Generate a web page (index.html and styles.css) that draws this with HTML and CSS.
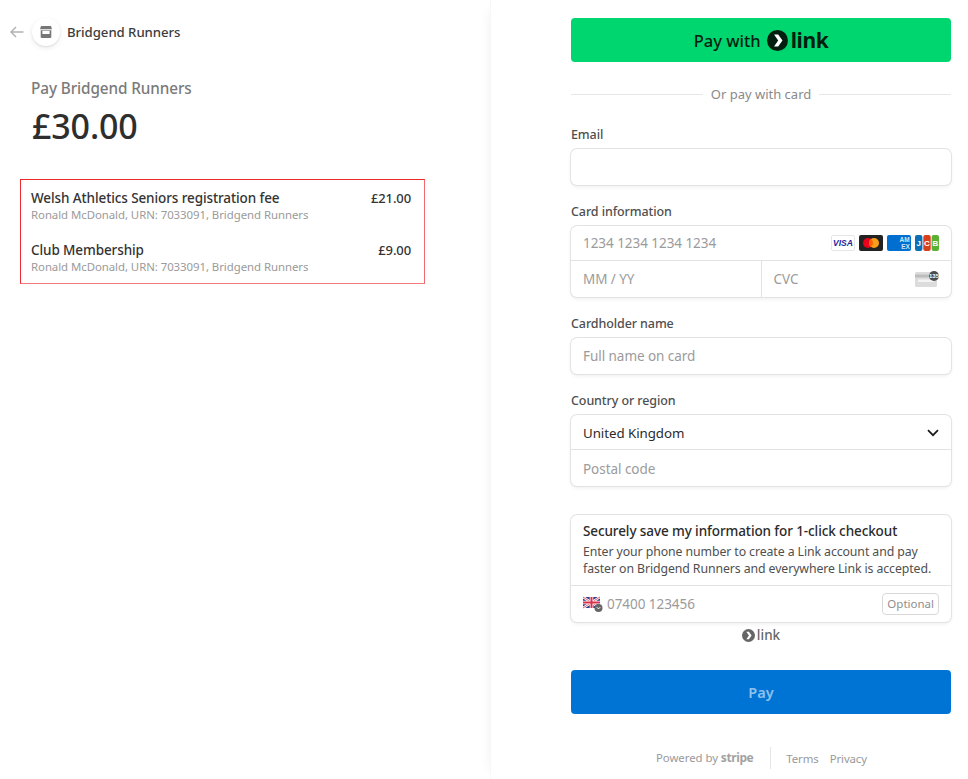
FILE: index.html
```html
<!DOCTYPE html>
<html lang="en">
<head>
<meta charset="utf-8">
<title>Pay Bridgend Runners</title>
<link rel="stylesheet" href="styles.css">
</head>
<body>
<div class="page">
  <section class="summary">
    <header class="merchant">
      <svg class="back" width="14" height="12" viewBox="0 0 14 12"><path d="M6 1 1 6l5 5M1 6h12.5" fill="none" stroke="#b3b3b3" stroke-width="1.5"/></svg>
      <span class="avatar">
        <svg width="12" height="12" viewBox="0 0 12 12"><path d="M1 0h10l1 3.2H0z" fill="#777"/><path d="M.7 4.2h10.6V11a1 1 0 0 1-1 1H1.7a1 1 0 0 1-1-1z" fill="#777"/><rect x="2.4" y="4.8" width="7.2" height="3.2" fill="#fff"/></svg>
      </span>
      <span class="merchant-name">Bridgend Runners</span>
    </header>
    <div class="pay-title">Pay Bridgend Runners</div>
    <div class="amount">£30.00</div>
    <div class="items">
      <div class="item">
        <div class="item-row"><span>Welsh Athletics Seniors registration fee</span><span class="price">£21.00</span></div>
        <div class="item-desc">Ronald McDonald, URN: 7033091, Bridgend Runners</div>
      </div>
      <div class="item">
        <div class="item-row"><span>Club Membership</span><span class="price">£9.00</span></div>
        <div class="item-desc">Ronald McDonald, URN: 7033091, Bridgend Runners</div>
      </div>
    </div>
  </section>
  <main class="checkout">
    <button class="link-btn" type="button">
      <span>Pay with</span>
      <svg width="21" height="21" viewBox="0 0 21 21"><circle cx="10.5" cy="10.5" r="10.5" fill="#011e0f"/><path d="M7 4.5h4.2l4.3 6-4.3 6H7l4.2-6z" fill="#fff"/></svg>
      <span class="link-word">link</span>
    </button>
    <div class="divider"><span>Or pay with card</span></div>

    <label class="label label-email">Email</label>
    <div class="box"><div class="field"></div></div>

    <label class="label">Card information</label>
    <div class="box">
      <div class="field field-line">
        <span class="ph">1234 1234 1234 1234</span>
        <span class="brands">
          <svg width="24" height="16" viewBox="0 0 24 16"><rect x=".5" y=".5" width="23" height="15" rx="1.5" fill="#fff" stroke="#e6e6e6"/><text x="12" y="11.2" class="visa">VISA</text></svg>
          <svg width="24" height="16" viewBox="0 0 24 16"><rect width="24" height="16" rx="2" fill="#222"/><circle cx="9" cy="8" r="5" fill="#eb001b"/><circle cx="15" cy="8" r="5" fill="#f79e1b"/><path d="M12 4a5 5 0 0 1 0 8 5 5 0 0 1 0-8z" fill="#ff5f00"/></svg>
          <svg width="24" height="16" viewBox="0 0 24 16"><rect width="24" height="16" rx="2" fill="#016fd0"/><text x="17.5" y="7.4" class="amex">AM</text><text x="18.5" y="13.6" class="amex">EX</text></svg>
          <svg width="24" height="16" viewBox="0 0 24 16"><rect width="7.4" height="16" rx="2" fill="#0b6fb5"/><rect x="8.3" width="7.4" height="16" rx="2" fill="#d8401c"/><rect x="16.6" width="7.4" height="16" rx="2" fill="#5ab033"/><text x="3.8" y="11" class="jcb">J</text><text x="12" y="11" class="jcb">C</text><text x="20.3" y="11" class="jcb">B</text></svg>
        </span>
      </div>
      <div class="split">
        <div class="field field-half"><span class="ph">MM / YY</span></div>
        <div class="field field-half field-cvc">
          <span class="ph">CVC</span>
          <svg width="24" height="16" viewBox="0 0 24 16"><rect y="1" width="22" height="15" rx="1.5" fill="#dcdcdc"/><rect y="3.5" width="22" height="3" fill="#bdbdbd"/><rect x="3" y="8.5" width="16" height="2.5" fill="#f4f4f4"/><circle cx="19" cy="5" r="5" fill="#4d4d4d"/><text x="19" y="7" class="cvc-num">135</text></svg>
        </div>
      </div>
    </div>

    <label class="label">Cardholder name</label>
    <div class="box"><div class="field"><span class="ph">Full name on card</span></div></div>

    <label class="label">Country or region</label>
    <div class="box">
      <div class="field field-line field-nudge">
        <span class="value">United Kingdom</span>
        <svg width="12" height="8" viewBox="0 0 12 8"><path d="M1 1.2 6 6.2l5-5" fill="none" stroke="#1a1a1a" stroke-width="1.7"/></svg>
      </div>
      <div class="field field-nudge"><span class="ph">Postal code</span></div>
    </div>

    <div class="box save">
      <div class="save-text">
        <div class="save-title">Securely save my information for 1-click checkout</div>
        <div class="save-desc">Enter your phone number to create a Link account and pay faster on Bridgend Runners and everywhere Link is accepted.</div>
      </div>
      <div class="phone">
        <svg class="flag" width="20" height="16" viewBox="0 0 20 16">
          <rect y="1" width="17" height="11" fill="#2a3f85"/>
          <path d="M0 1l17 11M17 1 0 12" stroke="#fff" stroke-width="2.4"/>
          <path d="M0 1l17 11M17 1 0 12" stroke="#d8334a" stroke-width=".8"/>
          <path d="M8.5 1v11M0 6.5h17" stroke="#fff" stroke-width="3.6"/>
          <path d="M8.5 1v11M0 6.5h17" stroke="#d8334a" stroke-width="2"/>
          <circle cx="15.5" cy="12" r="4" fill="#666"/>
          <path d="M13.8 11.2l1.7 1.7 1.7-1.7" stroke="#fff" fill="none"/>
        </svg>
        <span class="ph phone-ph">07400 123456</span>
        <span class="optional">Optional</span>
      </div>
    </div>
    <div class="link-mini">
      <svg width="13" height="13" viewBox="0 0 21 21"><circle cx="10.5" cy="10.5" r="10.5" fill="#666"/><path d="M7 4.5h4.2l4.3 6-4.3 6H7l4.2-6z" fill="#fff"/></svg>
      <span>link</span>
    </div>
    <button class="pay" type="button">Pay</button>
    <footer class="foot">
      <span class="powered">Powered by <b>stripe</b></span>
      <span class="foot-links"><span>Terms</span><span>Privacy</span></span>
    </footer>
  </main>
</div>
</body>
</html>
```
FILE: styles.css
```css
* { box-sizing: border-box; }
html, body { margin: 0; height: 100%; overflow: hidden; }
body { background: #fff; font-family: "Noto Sans", "Open Sans", sans-serif; color: #30313d; }
.page { display: flex; height: 779px; }

.summary { width: 490px; flex: none; padding: 14px 0 0 10px; }
.merchant { display: flex; align-items: center; height: 36px; }
.back { margin-right: 8px; }
.avatar { width: 28px; height: 28px; border-radius: 50%; background: #fff; box-shadow: 0 2px 5px rgba(50,50,93,.1), 0 1px 2px rgba(0,0,0,.07); display: flex; align-items: center; justify-content: center; }
.merchant-name { margin-left: 7px; font-size: 13.2px; font-weight: 500; color: #3c3c3c; letter-spacing: -.05px; }
.pay-title { margin: 28px 0 0 21px; font-size: 15.3px; line-height: 21px; font-weight: 500; color: #7a7a7a; letter-spacing: -.1px; }
.amount { margin: 4px 0 0 22px; font-size: 34px; line-height: 46px; font-weight: 500; color: #2e2e2e; letter-spacing: -.15px; }
.items { width: 405px; height: 105px; margin: 30px 0 0 10px; padding: 9px 13px 0 10px; border: 1px solid #ee2a2f; border-bottom-color: #f27a7d; border-right-color: #f4686b; }
.item { height: 52px; }
.item-row { display: flex; justify-content: space-between; font-size: 13.5px; line-height: 18px; font-weight: 500; color: #333; letter-spacing: -.1px; }
.price { font-size: 13px; }
.item-desc { font-size: 11.4px; line-height: 15px; color: #9a9a9a; letter-spacing: -.05px; }

.checkout { flex: 1; min-width: 0; padding: 18px 17px 0 80px; box-shadow: -10px 0 12px -10px rgba(0,0,0,.06); border-left: 1px solid #f7f7f7; }
.link-btn { display: flex; align-items: center; justify-content: center; width: 380px; height: 44px; border: 0; border-radius: 4px; background: #00d66f; color: #011e0f; font: 500 16.5px "Noto Sans", sans-serif; padding: 0; }
.link-btn svg { margin: 0 3px 0 6px; }
.link-word { font-size: 21px; font-weight: 700; letter-spacing: -.4px; line-height: 24px; }
.divider { display: flex; align-items: center; gap: 8px; margin-top: 22px; height: 20px; font-size: 13px; color: #8a8a8a; white-space: nowrap; }
.divider::before, .divider::after { content: ""; flex: 1; height: 1px; background: #e6e6e6; }

.label { display: block; margin-top: 17px; height: 24px; padding-top: 1px; font-size: 12.5px; line-height: 17px; font-weight: 500; color: #4f4f4f; letter-spacing: -.1px; }
.label-email { margin-top: 21px; }
.box { width: 380px; border-radius: 6px; background: #fff; box-shadow: 0 0 0 1px #e3e3e3, 0 2px 4px rgba(0,0,0,.07); }
.field { height: 36px; padding: 0 12px; display: flex; align-items: center; justify-content: space-between; font-size: 13.5px; }
.field-line { height: 35px; border-bottom: 1px solid #e3e3e3; }
.field-nudge { padding-top: 2px; }
.ph { color: #9b9b9b; letter-spacing: -.05px; }
.value { color: #2b2b2b; font-size: 13.3px; letter-spacing: -.05px; }
.brands { display: flex; gap: 4px; }
.visa { font: italic 700 8.5px "Liberation Sans", sans-serif; fill: #1a1f9c; text-anchor: middle; }
.amex { font: 700 6.5px "Liberation Sans", sans-serif; fill: #cfe3f6; text-anchor: middle; }
.jcb { font: 700 8px "Liberation Sans", sans-serif; fill: #fff; text-anchor: middle; }
.cvc-num { font: 700 6px "Liberation Sans", sans-serif; fill: #fff; text-anchor: middle; }
.split { display: flex; }
.field-half { flex: 1; }
.field-cvc { border-left: 1px solid #e3e3e3; }

.save { margin-top: 29px; height: 107px; }
.save-text { height: 71px; padding: 7px 12px 0; border-bottom: 1px solid #e3e3e3; }
.save-title { font-size: 13.5px; line-height: 18px; font-weight: 500; color: #2b2b2b; letter-spacing: -.1px; }
.save-desc { font-size: 12.3px; line-height: 17px; color: #4f4f4f; margin-top: 3px; letter-spacing: -.09px; }
.phone { display: flex; align-items: center; height: 36px; padding: 0 12px; font-size: 13.5px; }
.flag { margin-right: 4px; }
.phone-ph { flex: 1; }
.optional { border: 1px solid #d9d9d9; border-radius: 4px; font-size: 11.5px; line-height: 19px; height: 22px; padding: 0 4px; color: #8f8f8f; }
.link-mini { display: flex; align-items: center; justify-content: center; gap: 2px; height: 20px; margin-top: 3px; font-size: 13.5px; font-weight: 500; color: #666; width: 380px; }

.pay { display: block; width: 380px; height: 44px; margin-top: 25px; border: 0; border-radius: 4px; background: #0074d4; color: #8fc1ec; font: 600 14.5px "Noto Sans", sans-serif; }
.foot { display: flex; align-items: center; margin: 32px 0 0 85px; font-size: 11.4px; color: #999; height: 24px; }
.powered { padding-right: 17px; border-right: 1px solid #e6e6e6; height: 22px; line-height: 22px; letter-spacing: -.05px; }
.powered b { font-size: 12px; color: #a3a3a3; font-weight: 700; letter-spacing: -.4px; }
.foot-links { display: flex; gap: 11px; margin-left: 15px; letter-spacing: -.1px; }
```
